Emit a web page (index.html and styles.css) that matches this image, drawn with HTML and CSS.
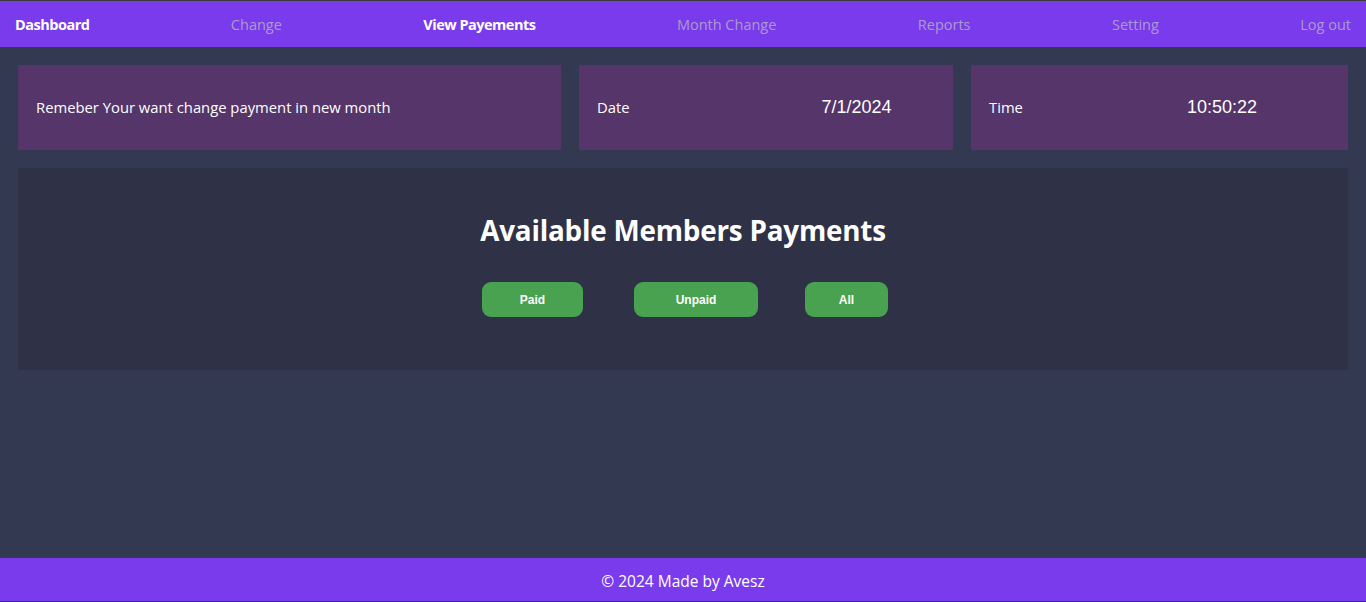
FILE: index.html
```html
<!DOCTYPE html>
<html lang="en">
<head>
<meta charset="utf-8">
<title>View Payements</title>
<link rel="stylesheet" href="styles.css">
</head>
<body>
<div class="page">
  <nav class="nav">
    <a class="nav-link active" href="#">Dashboard</a>
    <a class="nav-link" href="#">Change</a>
    <a class="nav-link active" href="#">View Payements</a>
    <a class="nav-link" href="#">Month Change</a>
    <a class="nav-link" href="#">Reports</a>
    <a class="nav-link" href="#">Setting</a>
    <a class="nav-link" href="#">Log out</a>
  </nav>
  <main class="main">
    <section class="cards">
      <div class="card"><span class="label">Remeber Your want change payment in new month</span></div>
      <div class="card"><span class="label">Date</span><span class="value value-date">7/1/2024</span></div>
      <div class="card"><span class="label">Time</span><span class="value value-time">10:50:22</span></div>
    </section>
    <section class="panel">
      <h1 class="title">Available Members Payments</h1>
      <div class="buttons">
        <button class="btn btn-paid">Paid</button>
        <button class="btn btn-unpaid">Unpaid</button>
        <button class="btn btn-all">All</button>
      </div>
    </section>
  </main>
  <footer class="footer">© 2024 Made by Avesz</footer>
</div>
</body>
</html>
```
FILE: styles.css
```css
* { box-sizing: border-box; }
html, body { margin: 0; padding: 0; height: 100%; }
body {
  background: #333950;
  font-family: "Open Sans", "DejaVu Sans", sans-serif;
  color: #fff;
}
.page {
  display: flex;
  flex-direction: column;
  min-height: 602px;
  border-top: 1px solid #3a3a3a;
  border-bottom: 1px solid #3a2a6a;
}
.nav {
  background: #7a3bec;
  height: 46px;
  display: flex;
  align-items: center;
  justify-content: space-between;
  padding: 0 15px;
}
.nav-link {
  color: #ab9bcc;
  text-decoration: none;
  font-size: 14.5px;
}
.nav-link.active {
  color: #fff;
  font-weight: 700;
  letter-spacing: -0.5px;
}
.main {
  flex: 1;
  padding: 18px 18px 0;
  display: flex;
  flex-direction: column;
  gap: 18px;
}
.cards {
  display: grid;
  grid-template-columns: 543fr 374fr 377fr;
  gap: 18px;
}
.card {
  background: #55356a;
  height: 85px;
  display: flex;
  align-items: center;
  padding: 0 18px 2px;
}
.label {
  font-size: 14.8px;
  color: #fff;
}
.value {
  font-family: "Liberation Sans", Arial, sans-serif;
  font-size: 18px;
  margin-top: 2px;
}
.value-date { margin-left: 192px; }
.value-time { margin-left: 164px; }
.panel {
  background: #2f3246;
  height: 202px;
  display: flex;
  flex-direction: column;
  align-items: center;
  padding-top: 42px;
}
.title {
  margin: 0;
  font-size: 27.8px;
  font-weight: 700;
  line-height: 40px;
  letter-spacing: -0.2px;
}
.buttons {
  display: flex;
  margin-top: 32px;
  margin-left: 4px;
}
.btn {
  background: #48a24f;
  color: #fff;
  border: none;
  border-radius: 9px;
  height: 35px;
  font-family: "Liberation Sans", Arial, sans-serif;
  font-size: 12px;
  font-weight: 700;
  padding: 0;
}
.btn-paid { width: 101px; }
.btn-unpaid { width: 124px; margin-left: 51px; }
.btn-all { width: 83px; margin-left: 47px; }
.footer {
  background: #7a3bec;
  height: 43px;
  display: flex;
  align-items: center;
  justify-content: center;
  font-size: 15.5px;
  color: #fff;
  padding-top: 2px;
}
```
